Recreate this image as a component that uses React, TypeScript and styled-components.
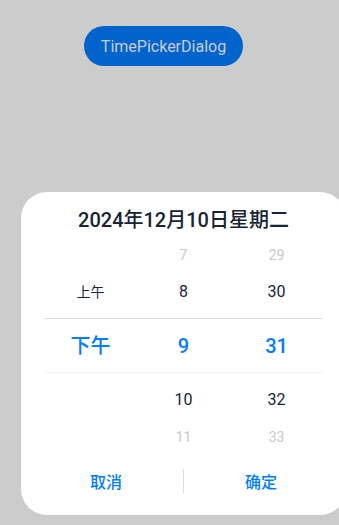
import React from "react";
import styled, { createGlobalStyle } from "styled-components";

const GlobalStyle = createGlobalStyle`
  html, body {
    margin: 0;
    padding: 0;
    background: #cccccc;
    overflow: hidden;
  }
  body {
    font-family: Roboto, "Noto Sans CJK SC", sans-serif;
  }
`;

const BLUE = "#007dff";
const TEXT = "#182431";

type Pos = "above" | "selected" | "below";
type Tone = "faint" | "normal" | "active";

const columns: { cells: { text: string; tone: Tone; pos: Pos }[]; cjk?: boolean }[] = [
  {
    cjk: true,
    cells: [
      { text: "", tone: "faint", pos: "above" },
      { text: "上午", tone: "normal", pos: "above" },
      { text: "下午", tone: "active", pos: "selected" },
      { text: "", tone: "normal", pos: "below" },
      { text: "", tone: "faint", pos: "below" },
    ],
  },
  {
    cells: [
      { text: "7", tone: "faint", pos: "above" },
      { text: "8", tone: "normal", pos: "above" },
      { text: "9", tone: "active", pos: "selected" },
      { text: "10", tone: "normal", pos: "below" },
      { text: "11", tone: "faint", pos: "below" },
    ],
  },
  {
    cells: [
      { text: "29", tone: "faint", pos: "above" },
      { text: "30", tone: "normal", pos: "above" },
      { text: "31", tone: "active", pos: "selected" },
      { text: "32", tone: "normal", pos: "below" },
      { text: "33", tone: "faint", pos: "below" },
    ],
  },
];

export default function App() {
  return (
    <>
      <GlobalStyle />
      <Page>
        <OpenButton>TimePickerDialog</OpenButton>
        <Dialog>
          <Title>2024年12月10日星期二</Title>
          <Picker>
            <Band />
            {columns.map((col, i) => (
              <Column key={i}>
                {col.cells.map((cell, j) => (
                  <Cell key={j} $pos={cell.pos} $tone={cell.tone} $cjk={!!col.cjk}>
                    {cell.text}
                  </Cell>
                ))}
              </Column>
            ))}
          </Picker>
          <Footer>
            <FooterButton>取消</FooterButton>
            <FooterDivider />
            <FooterButton>确定</FooterButton>
          </Footer>
        </Dialog>
      </Page>
    </>
  );
}

const Page = styled.div`
  width: 339px;
  height: 525px;
  display: flex;
  flex-direction: column;
  align-items: flex-start;
`;

const OpenButton = styled.button`
  margin: 26px 0 0 84px;
  height: 40px;
  width: 159px;
  border: none;
  border-radius: 20px;
  background: #0064cc;
  color: #cccccc;
  font-family: Roboto, sans-serif;
  font-size: 16px;
  padding: 0;
`;

const Dialog = styled.div`
  margin: 126px 0 0 21px;
  width: 325px;
  min-width: 325px;
  height: 323px;
  background: #ffffff;
  border-radius: 26px;
  display: flex;
  flex-direction: column;
  flex-shrink: 0;
`;

const Title = styled.div`
  height: 52px;
  display: flex;
  align-items: center;
  justify-content: center;
  font-size: 20px;
  font-weight: 500;
  color: ${TEXT};
`;

const Picker = styled.div`
  position: relative;
  margin: 0 23px;
  display: grid;
  grid-template-columns: repeat(3, 1fr);
  height: 202px;
`;

const Band = styled.div`
  position: absolute;
  left: 0;
  right: 0;
  top: 74px;
  height: 53px;
  border-top: 1px solid #dcdcdc;
  border-bottom: 1px solid #f4f4f4;
  pointer-events: none;
`;

const Column = styled.div`
  display: flex;
  flex-direction: column;
  align-items: center;
`;

const Cell = styled.div<{ $pos: Pos; $tone: Tone; $cjk: boolean }>`
  height: ${(p) => (p.$pos === "selected" ? 54 : 37)}px;
  box-sizing: border-box;
  display: flex;
  align-items: ${(p) => (p.$pos === "selected" ? "center" : "flex-start")};
  padding-top: ${(p) => (p.$pos === "below" ? 17 : p.$pos === "selected" ? 2 : 0)}px;
  line-height: 22px;
  font-size: ${(p) =>
    p.$tone === "active" ? 20 : p.$tone === "faint" ? 14 : p.$cjk ? 14 : 16}px;
  font-weight: ${(p) => (p.$tone === "active" ? 500 : 400)};
  color: ${(p) =>
    p.$tone === "active" ? BLUE : p.$tone === "faint" ? "#c9c9c9" : TEXT};
`;

const Footer = styled.div`
  margin: 11px 8px 0;
  height: 48px;
  display: flex;
  align-items: center;
`;

const FooterButton = styled.div`
  flex: 1;
  text-align: center;
  font-size: 16px;
  font-weight: 500;
  color: ${BLUE};
`;

const FooterDivider = styled.div`
  width: 1px;
  height: 24px;
  background: #dcdcdc;
`;
